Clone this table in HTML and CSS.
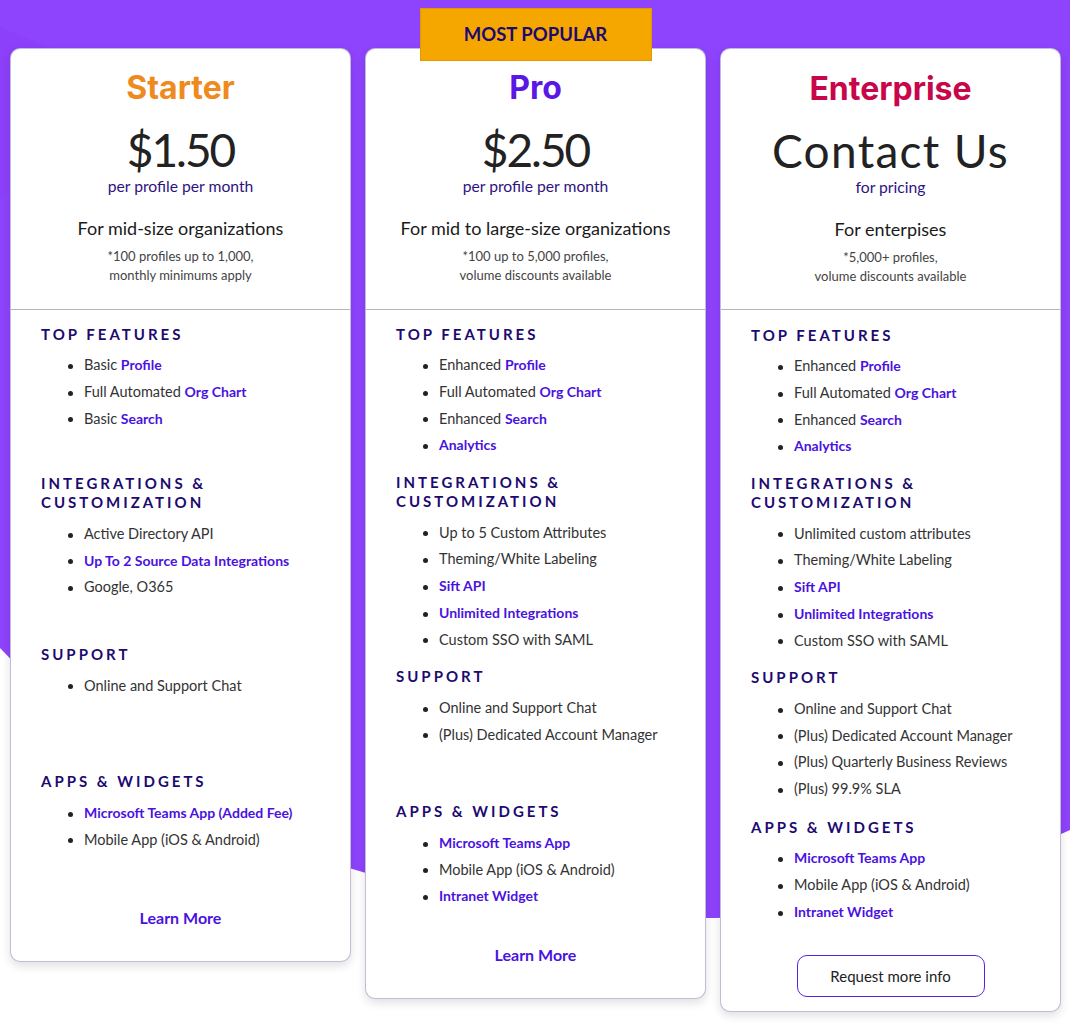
FILE: index.html
```html
<!DOCTYPE html>
<html lang="en">
<head>
<meta charset="utf-8">
<title>Pricing</title>
<link rel="stylesheet" href="styles.css">
</head>
<body>
<div class="page">
  <svg class="backdrop" viewBox="0 0 1070 1023" aria-hidden="true">
    <path d="M0 0H1070V830Q880 918 713 918C450 918 200 860 0 648Z" fill="#8e43fd"/>
    <path d="M0 27L150 90L0 200Z" fill="#8a3ff6" opacity="0.6"/>
  </svg>
  <div class="plans">
    <article class="card">
      <header class="card-top">
        <h2 class="plan plan-starter">Starter</h2>
        <div class="price price-num">$1.50</div>
        <div class="unit">per profile per month</div>
        <p class="audience">For mid-size organizations</p>
        <p class="fine">*100 profiles up to 1,000,<br>monthly minimums apply</p>
      </header>
      <div class="card-body">
        <div class="group extra-28">
          <h3>Top Features</h3>
          <ul>
            <li>Basic <b class="hl">Profile</b></li>
            <li>Full Automated <b class="hl">Org Chart</b></li>
            <li>Basic <b class="hl">Search</b></li>
          </ul>
        </div>
        <div class="group extra-30">
          <h3>Integrations &amp;<br>Customization</h3>
          <ul>
            <li>Active Directory API</li>
            <li><b class="hl">Up To 2 Source Data Integrations</b></li>
            <li>Google, O365</li>
          </ul>
        </div>
        <div class="group extra-59">
          <h3>Support</h3>
          <ul>
            <li>Online and Support Chat</li>
          </ul>
        </div>
        <div class="group extra-20">
          <h3>Apps &amp; Widgets</h3>
          <ul>
            <li><b class="hl">Microsoft Teams App (Added Fee)</b></li>
            <li>Mobile App (iOS &amp; Android)</li>
          </ul>
        </div>
        <a class="learn" href="#">Learn More</a>
      </div>
    </article>

    <article class="card card-featured">
      <div class="badge">MOST POPULAR</div>
      <header class="card-top">
        <h2 class="plan plan-pro">Pro</h2>
        <div class="price price-num">$2.50</div>
        <div class="unit">per profile per month</div>
        <p class="audience">For mid to large-size organizations</p>
        <p class="fine">*100 up to 5,000 profiles,<br>volume discounts available</p>
      </header>
      <div class="card-body">
        <div class="group">
          <h3>Top Features</h3>
          <ul>
            <li>Enhanced <b class="hl">Profile</b></li>
            <li>Full Automated <b class="hl">Org Chart</b></li>
            <li>Enhanced <b class="hl">Search</b></li>
            <li><b class="hl">Analytics</b></li>
          </ul>
        </div>
        <div class="group">
          <h3>Integrations &amp;<br>Customization</h3>
          <ul>
            <li>Up to 5 Custom Attributes</li>
            <li>Theming/White Labeling</li>
            <li><b class="hl">Sift API</b></li>
            <li><b class="hl">Unlimited Integrations</b></li>
            <li>Custom SSO with SAML</li>
          </ul>
        </div>
        <div class="group extra-39">
          <h3>Support</h3>
          <ul>
            <li>Online and Support Chat</li>
            <li>(Plus) Dedicated Account Manager</li>
          </ul>
        </div>
        <div class="group">
          <h3>Apps &amp; Widgets</h3>
          <ul>
            <li><b class="hl">Microsoft Teams App</b></li>
            <li>Mobile App (iOS &amp; Android)</li>
            <li><b class="hl">Intranet Widget</b></li>
          </ul>
        </div>
        <a class="learn" href="#">Learn More</a>
      </div>
    </article>

    <article class="card card-enterprise">
      <header class="card-top">
        <h2 class="plan plan-enterprise">Enterprise</h2>
        <div class="price price-text">Contact Us</div>
        <div class="unit">for pricing</div>
        <p class="audience">For enterpises</p>
        <p class="fine">*5,000+ profiles,<br>volume discounts available</p>
      </header>
      <div class="card-body">
        <div class="group">
          <h3>Top Features</h3>
          <ul>
            <li>Enhanced <b class="hl">Profile</b></li>
            <li>Full Automated <b class="hl">Org Chart</b></li>
            <li>Enhanced <b class="hl">Search</b></li>
            <li><b class="hl">Analytics</b></li>
          </ul>
        </div>
        <div class="group">
          <h3>Integrations &amp;<br>Customization</h3>
          <ul>
            <li>Unlimited custom attributes</li>
            <li>Theming/White Labeling</li>
            <li><b class="hl">Sift API</b></li>
            <li><b class="hl">Unlimited Integrations</b></li>
            <li>Custom SSO with SAML</li>
          </ul>
        </div>
        <div class="group extra-1">
          <h3>Support</h3>
          <ul>
            <li>Online and Support Chat</li>
            <li>(Plus) Dedicated Account Manager</li>
            <li>(Plus) Quarterly Business Reviews</li>
            <li>(Plus) 99.9% SLA</li>
          </ul>
        </div>
        <div class="group">
          <h3>Apps &amp; Widgets</h3>
          <ul>
            <li><b class="hl">Microsoft Teams App</b></li>
            <li>Mobile App (iOS &amp; Android)</li>
            <li><b class="hl">Intranet Widget</b></li>
          </ul>
        </div>
        <a class="btn-outline" href="#">Request more info</a>
      </div>
    </article>
  </div>
</div>
</body>
</html>
```

FILE: styles.css
```css
* { box-sizing: border-box; }

html, body {
  margin: 0;
  padding: 0;
  background: #ffffff;
}

body {
  font-family: "Lato", "Liberation Sans", sans-serif;
  color: #222;
}

.page {
  position: relative;
  width: 1070px;
  height: 1023px;
  overflow: hidden;
}

.backdrop {
  position: absolute;
  top: 0;
  left: 0;
  width: 1070px;
  height: 1023px;
  z-index: 0;
}

.plans {
  position: relative;
  z-index: 1;
  display: grid;
  grid-template-columns: 341px 341px 341px;
  column-gap: 14px;
  align-items: start;
  padding: 48px 0 0 10px;
}

.card {
  position: relative;
  background: #fff;
  border: 1px solid rgba(40, 10, 110, 0.28);
  border-radius: 10px;
  box-shadow: 0 4px 10px rgba(0, 0, 0, 0.12);
}

.badge {
  position: absolute;
  top: -41px;
  left: 50%;
  transform: translateX(-50%);
  width: 232px;
  height: 53px;
  background: #f5a700;
  border: 1px solid #e09a00;
  color: #1d0a70;
  font-family: "Lato", sans-serif;
  font-weight: 700;
  font-size: 18.5px;
  line-height: 51px;
  text-align: center;
}

.card-top {
  text-align: center;
  padding: 19px 10px 24.5px;
  border-bottom: 1px solid #b5b5b5;
}

.card-enterprise .card-top {
  padding-top: 20px;
  padding-bottom: 23.5px;
}

.plan {
  margin: 0;
  font-family: "Inter", "Lato", sans-serif;
  font-weight: 700;
  font-size: 32px;
  line-height: 40px;
}

.plan-starter { color: #ef8a1f; }
.plan-pro { color: #5a17e6; }
.plan-enterprise { color: #c8074b; }

.price {
  margin-top: 14px;
  font-family: "Lato", sans-serif;
  font-weight: 400;
  font-size: 46px;
  line-height: 56px;
  color: #222;
}

.price-num { letter-spacing: -2px; }
.price-text { letter-spacing: 1.3px; }

.unit {
  margin-top: -2px;
  font-size: 15.7px;
  line-height: 20px;
  color: #2e1282;
}

.audience {
  margin: 20px 0 0;
  font-size: 18px;
  line-height: 24px;
  color: #1a1a1a;
}

.fine {
  margin: 6.5px 0 0;
  font-size: 13px;
  line-height: 19px;
  color: #444;
}

.card-body {
  padding: 14.5px 20px 32px 30px;
}

.card-enterprise .card-body {
  padding-top: 15.5px;
  padding-bottom: 14px;
}

.group {
  padding-bottom: 14px;
}

.extra-1 { padding-bottom: 15px; }
.extra-20 { padding-bottom: 34px; }
.extra-28 { padding-bottom: 42px; }
.extra-30 { padding-bottom: 44px; }
.extra-39 { padding-bottom: 54px; }
.extra-59 { padding-bottom: 73px; }

.group h3 {
  margin: 0 0 8.5px;
  font-family: "Lato", sans-serif;
  font-weight: 700;
  font-size: 15px;
  line-height: 19px;
  letter-spacing: 3px;
  text-transform: uppercase;
  color: #1d0a70;
}

.group ul {
  list-style: none;
  margin: 0;
  padding: 0;
}

.group li {
  padding-left: 43px;
  font-size: 14.5px;
  line-height: 26.75px;
  color: #333;
  white-space: nowrap;
}

.group li::before {
  content: "";
  display: inline-block;
  width: 5px;
  height: 5px;
  border-radius: 50%;
  background: #222;
  margin-left: -16px;
  margin-right: 11px;
  vertical-align: middle;
}

.hl {
  font-size: 14px;
  font-weight: 700;
  color: #4a12e0;
}

.learn {
  display: block;
  margin-top: 20px;
  margin-left: -10px;
  text-align: center;
  font-weight: 700;
  font-size: 16px;
  line-height: 22px;
  color: #4a12e0;
  text-decoration: none;
}

.btn-outline {
  display: block;
  width: 188px;
  height: 42px;
  margin: 15.6px auto 0;
  position: relative;
  left: -5px;
  border: 1px solid #5a22e0;
  border-radius: 10px;
  font-size: 15px;
  line-height: 40px;
  text-align: center;
  color: #222;
  text-decoration: none;
}
```
